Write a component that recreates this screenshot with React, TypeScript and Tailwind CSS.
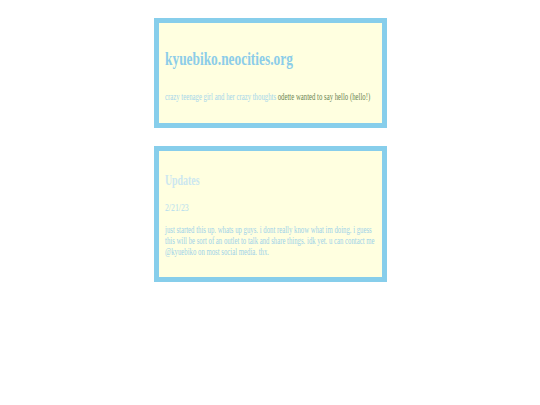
import type { ReactElement, ReactNode } from "react";

// the page text is set narrow; squeeze each block from its left edge
const squeeze = "origin-left scale-x-[0.704] w-[300px]";

function Panel({ height, children }: { height: string; children: ReactNode }): ReactElement {
  return (
    <section className={`mx-auto w-[233px] ${height} border-[5px] border-[#87ceeb] bg-[#ffffe0] pl-[6px]`}>
      {children}
    </section>
  );
}

export default function App(): ReactElement {
  return (
    <div className="min-h-[405px] bg-white pt-[18px] font-['Liberation_Serif','Times_New_Roman',serif]">
      <Panel height="h-[110px]">
        <h1 className={`${squeeze} pt-[26px] text-[19px] font-bold leading-[20px] text-[#8ccde9]`}>
          kyuebiko.neocities.org
        </h1>
        <p className={`${squeeze} mt-[22px] text-[9.6px] leading-[11px] text-[#a6d6ea]`}>
          crazy teenage girl and her crazy thoughts{" "}
          <span className="text-[#6a8553]">odette wanted to say hello (hello!)</span>
        </p>
      </Panel>

      <div className="mt-[18px]">
        <Panel height="h-[136px]">
          <h2 className={`${squeeze} pt-[22px] text-[14px] font-bold leading-[16px] text-[#cce7f0]`}>
            Updates
          </h2>
          <h3 className={`${squeeze} mt-[12px] text-[11px] leading-[13px] text-[#b3dcee]`}>
            2/21/23
          </h3>
          <p className={`${squeeze} mt-[10px] text-[9.6px] leading-[11px] text-[#9ed2e8]`}>
            just started this up. whats up guys. i dont really know what im doing. i guess this will
            be sort of an outlet to talk and share things. idk yet. u can contact me @kyuebiko on
            most social media. thx.
          </p>
        </Panel>
      </div>
    </div>
  );
}
